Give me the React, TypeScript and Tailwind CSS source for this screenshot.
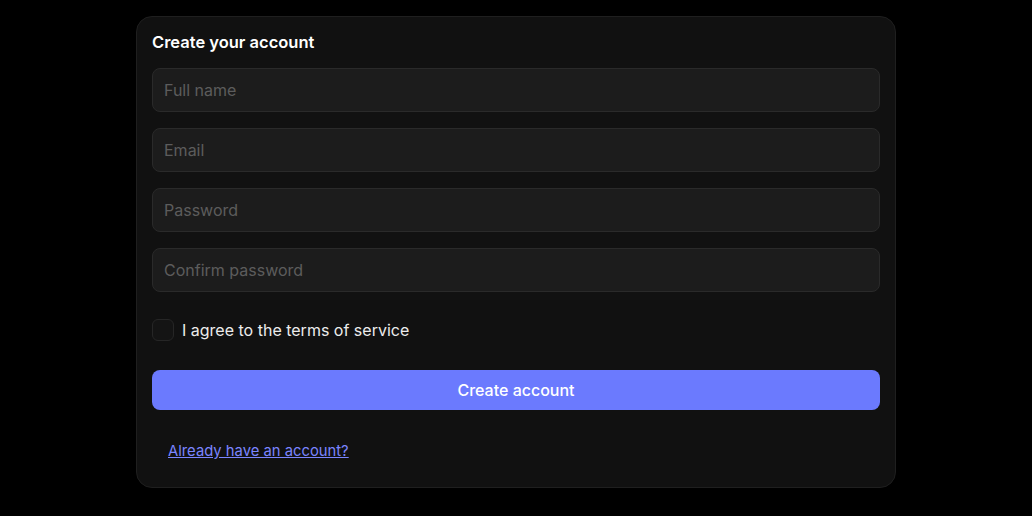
import { useState } from 'react';

const FIELDS = [
  { name: 'name', type: 'text', placeholder: 'Full name' },
  { name: 'email', type: 'email', placeholder: 'Email' },
  { name: 'password', type: 'password', placeholder: 'Password' },
  { name: 'confirm', type: 'password', placeholder: 'Confirm password' },
];

export default function App() {
  const [agreed, setAgreed] = useState(false);

  return (
    <div className="min-h-screen w-full bg-black pt-4 font-['Inter','Noto_Sans',sans-serif]">
      <form
        className="mx-auto flex w-[760px] flex-col gap-4 rounded-2xl border border-[#1f1f1f] bg-[#111111] p-[15px]"
        onSubmit={(e) => e.preventDefault()}
      >
        <h1 className="text-[16.5px] font-semibold leading-5 text-white">Create your account</h1>

        {FIELDS.map((f) => (
          <input
            key={f.name}
            name={f.name}
            type={f.type}
            placeholder={f.placeholder}
            className="h-11 w-full rounded-lg border border-[#2a2a2a] bg-[#1c1c1c] px-[11px] text-[16px] text-white placeholder:text-[#5c5c5c] outline-none"
          />
        ))}

        <label className="flex h-11 items-center gap-2 text-[16px] text-[#ececec]">
          <input
            type="checkbox"
            checked={agreed}
            onChange={(e) => setAgreed(e.target.checked)}
            className="h-[22px] w-[22px] appearance-none rounded-md border border-[#262626] bg-[#141414]"
          />
          I agree to the terms of service
        </label>

        <div className="flex h-11 items-center">
          <button
            type="submit"
            className="h-10 w-full rounded-lg bg-[#6b7afe] text-[16px] font-medium text-white"
          >
            Create account
          </button>
        </div>

        <div className="flex h-11 items-center px-4 pt-[2px]">
          <a href="#" className="text-[14.8px] text-[#7b85ff] underline">
            Already have an account?
          </a>
        </div>
      </form>
    </div>
  );
}
